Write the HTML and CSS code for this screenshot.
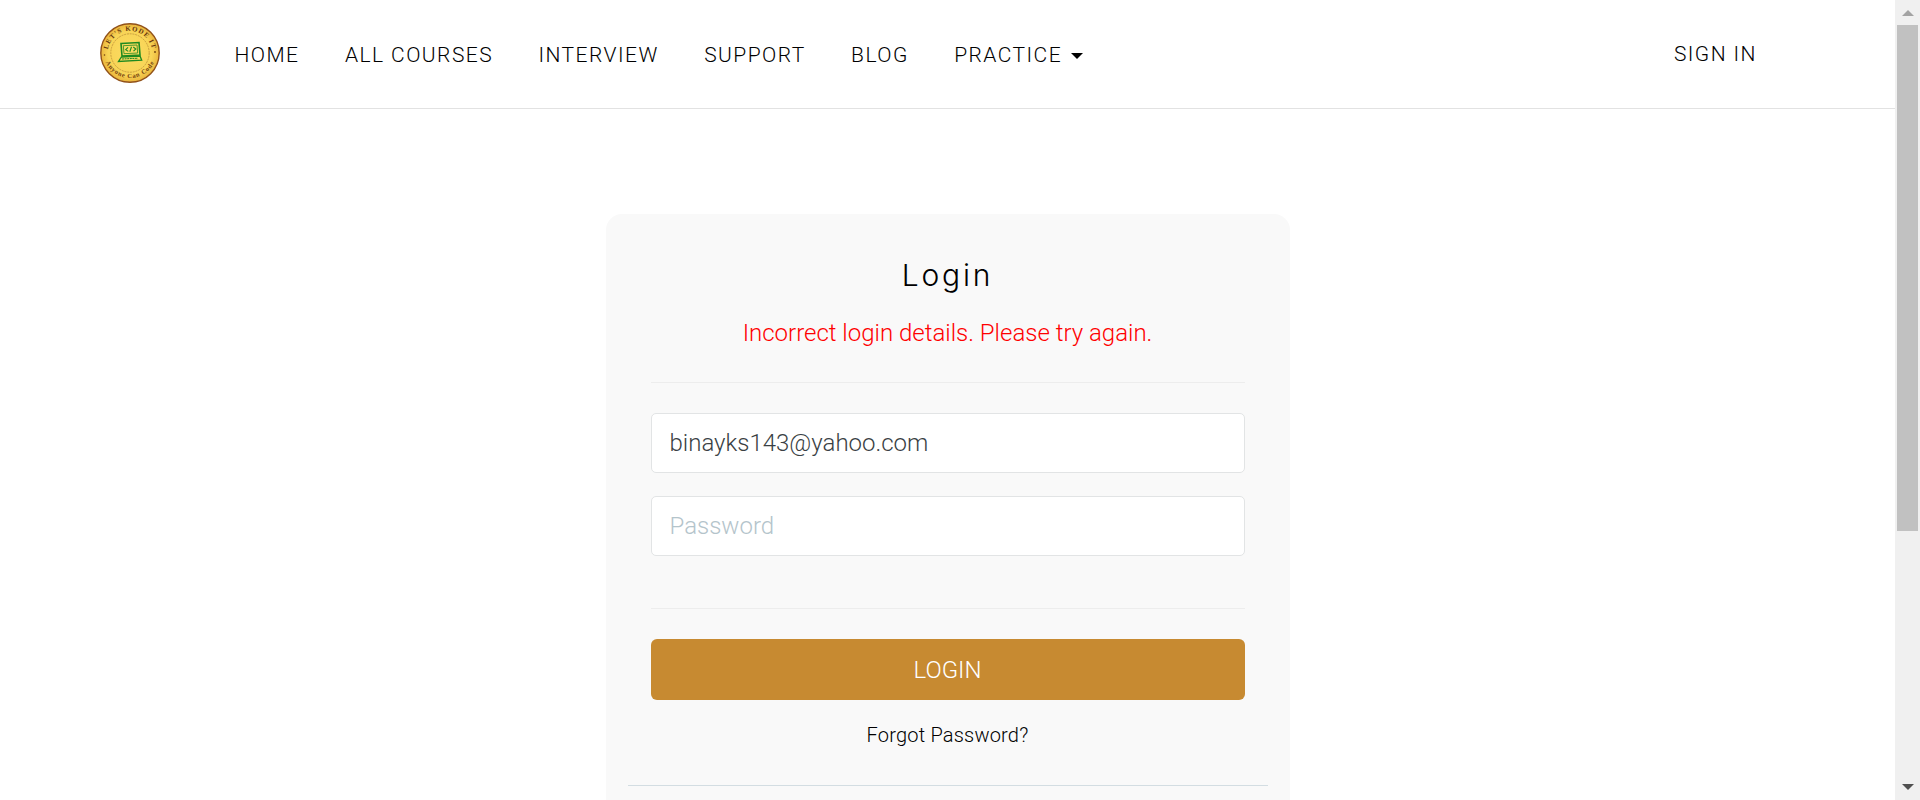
FILE: index.html
```html
<!DOCTYPE html>
<html lang="en">
<head>
<meta charset="utf-8">
<title>Login</title>
<link rel="stylesheet" href="styles.css">
</head>
<body>
<div class="window">
  <div class="page">
    <header class="header">
      <a class="logo" href="#" aria-label="Let's Kode It">
        <svg width="62" height="62" viewBox="0 0 62 62">
          <defs>
            <radialGradient id="gold"><stop offset="0" stop-color="#fbdc62"/><stop offset=".75" stop-color="#f8d456"/><stop offset="1" stop-color="#eab53c"/></radialGradient>
            <path id="top" d="M9.5 37 A22.3 22.3 0 1 1 52.5 37"/>
            <path id="bottom" d="M5.5 37 A26.6 26.6 0 0 0 56.5 37"/>
          </defs>
          <circle cx="31" cy="31" r="29.2" fill="url(#gold)" stroke="#91521a" stroke-width="1.4"/>
          <circle cx="31" cy="31" r="19.2" fill="none" stroke="#b68a35" stroke-width=".7" stroke-dasharray="2 .8"/>
          <text class="logo-top"><textPath href="#top" startOffset="50%" text-anchor="middle">LET'S KODE IT</textPath></text>
          <text class="logo-bottom"><textPath href="#bottom" startOffset="50%" text-anchor="middle">Anyone Can Code</textPath></text>
          <circle cx="5.5" cy="33" r=".8" fill="#70400e"/><circle cx="56" cy="30" r=".9" fill="#70400e"/>
          <g fill="none" stroke="#1f8a20">
            <path d="M22 21.5 L40 20.5 L41 33 L23 34 Z" stroke-width="1.6"/>
            <path d="M24.3 23.7 L38 23 L38.7 31 L25 31.7 Z" stroke-width=".8"/>
            <path d="M29 25.4 L26.7 27.7 L29.3 29.4 M32.5 24.8 L30.8 29.8 M34.3 25 L36.8 27 L34.5 29.2" stroke-width="1.1"/>
            <path d="M22.5 35 L41 34 L42.7 38.2 L19.5 39.5 Z" stroke-width="1.3"/>
            <path d="M23 37 L39 36.2" stroke-width="1" stroke-dasharray="2 .6"/>
          </g>
        </svg>
      </a>
      <nav class="nav">
        <a href="#">HOME</a>
        <a href="#">ALL COURSES</a>
        <a href="#">INTERVIEW</a>
        <a href="#">SUPPORT</a>
        <a href="#">BLOG</a>
        <a href="#">PRACTICE<span class="caret"></span></a>
      </nav>
      <a class="sign-in" href="#">SIGN IN</a>
    </header>
    <main class="main">
      <section class="card">
        <form class="form">
          <h1 class="title">Login</h1>
          <p class="error">Incorrect login details. Please try again.</p>
          <hr class="rule">
          <input class="field" type="text" value="binayks143@yahoo.com" aria-label="Email">
          <input class="field" type="password" placeholder="Password">
          <hr class="rule rule-actions">
          <button class="submit" type="button">LOGIN</button>
          <a class="forgot" href="#">Forgot Password?</a>
        </form>
        <hr class="divider">
      </section>
    </main>
  </div>
  <div class="scrollbar">
    <div class="arrow-box"><span class="arrow-up"></span></div>
    <div class="thumb"></div>
    <div class="arrow-box arrow-end"><span class="arrow-down"></span></div>
  </div>
</div>
</body>
</html>
```
FILE: styles.css
```css
* { box-sizing: border-box; }
body { margin: 0; background: #fff; font-family: Roboto, sans-serif; font-weight: 300; color: #000; overflow: hidden; }
a { color: inherit; text-decoration: none; }
.window { display: flex; height: 800px; overflow: hidden; }
.page { flex: 1; height: 800px; overflow: hidden; }
.header { display: flex; align-items: flex-start; height: 109px; border-bottom: 1px solid #e2e2e2; padding-left: 99px; }
.logo { display: block; width: 62px; height: 62px; margin-top: 22px; }
.logo svg { display: block; }
.logo-top { font: 700 6.8px "Liberation Serif", serif; letter-spacing: 1px; fill: #65350c; }
.logo-bottom { font: 700 6.5px "Liberation Serif", serif; letter-spacing: .7px; fill: #74420f; }
.nav { display: flex; gap: 45.4px; margin: 40px 0 0 73.5px; }
.nav a, .sign-in { font-size: 21px; line-height: 30px; letter-spacing: 1.45px; white-space: nowrap; }
.caret { display: inline-block; margin-left: 9px; border: 6px solid transparent; border-top-color: #000; border-bottom: 0; vertical-align: 3px; }
.sign-in { margin: 39px 138px 0 auto; }
.main { display: flex; justify-content: center; padding-top: 105px; }
.card { width: 684px; height: 700px; padding: 41px 22px 0; border-radius: 16px; background: #f9f9f9; }
.form { display: flex; flex-direction: column; padding: 0 23px; }
.title { margin: 0; font: 300 30px/40px Inter, sans-serif; letter-spacing: 2.8px; text-align: center; }
.error { margin: 20px 0 0; font-size: 24px; line-height: 36px; color: #f00; text-align: center; }
.rule { width: 100%; height: 1px; margin: 31px 0 30px; border: 0; background: #ededed; }
.field { width: 100%; height: 60px; margin: 0 0 23px; padding: 0 18px; border: 1px solid #e2e4e5; border-radius: 5px; background: #fff; font: 300 24px Roboto, sans-serif; color: #3a3f44; }
.field::placeholder { color: #b4c4cb; opacity: 1; }
.rule-actions { margin-top: 29px; }
.submit { height: 61px; padding: 0; border: 0; border-radius: 6px; background: #c78a31; color: #fff; font: 300 24px Roboto, sans-serif; }
.forgot { margin-top: 20px; font-size: 20px; line-height: 30px; letter-spacing: .2px; text-align: center; }
.divider { height: 1px; margin: 35px 0 0; border: 0; background: #d3dde2; }
.scrollbar { display: flex; flex-direction: column; width: 25px; background: #f0f0f0; }
.arrow-box { display: flex; justify-content: center; height: 25px; padding-top: 10px; }
.thumb { height: 506px; margin: 0 2px; background: #c1c1c1; }
.arrow-end { margin-top: auto; padding-top: 9px; }
.arrow-up, .arrow-down { width: 12px; height: 6px; border: 6px solid transparent; }
.arrow-up { border-top: 0; border-bottom-color: #a3a3a3; }
.arrow-down { border-bottom: 0; border-top-color: #505050; }
```
